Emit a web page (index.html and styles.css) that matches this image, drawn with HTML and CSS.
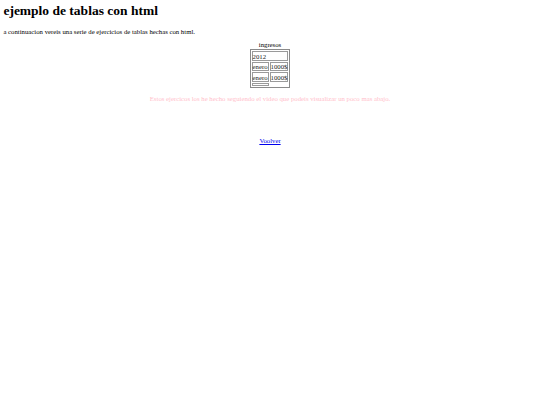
FILE: index.html
```html
<!DOCTYPE html>
<html lang="es">
<head>
<meta charset="utf-8">
<title>ejemplo de tablas con html</title>
<link rel="stylesheet" href="styles.css">
</head>
<body>
<h1 class="title">ejemplo de tablas con html</h1>
<p class="intro">a continuacion vereis una serie de ejercicios de tablas hechas con html.</p>
<table class="data">
<caption>ingresos</caption>
<tr><td colspan="2">2012</td></tr>
<tr><td>enero</td><td>1000$</td></tr>
<tr><td>enero</td><td>1000$</td></tr>
<tr class="blank"><td></td></tr>
</table>
<p class="note">Estos ejercicos los he hecho seguiendo el video que podeis visualizar un poco mas abajo.</p>
<div class="spacer"></div>
<p class="back"><a href="#">Voolver</a></p>
</body>
</html>
```
FILE: styles.css
```css
body {
  font-family: "Liberation Serif", "Times New Roman", serif;
  font-size: 6.75px;
  margin: 3px 3.4px;
  color: #000;
}
.title {
  font-size: 13.5px;
  margin: 0 0 8.5px;
}
.intro {
  margin: 0 0 6.75px;
}
.data {
  margin: 0 auto;
  border: 1px solid #8a8a8a;
  border-spacing: 1px;
}
.data caption {
  line-height: 8px;
}
.data td {
  border: 1px solid #9a9a9a;
  padding: 0.3px 0;
  line-height: 7px;
  color: #222;
}
.data .blank td {
  height: 1px;
  padding: 0;
}
.note {
  color: pink;
  text-align: center;
  margin: 6.75px 0;
}
.spacer {
  height: 22px;
}
.back {
  text-align: center;
  margin: 6.75px 0;
}
a {
  color: #0000ee;
}
```
